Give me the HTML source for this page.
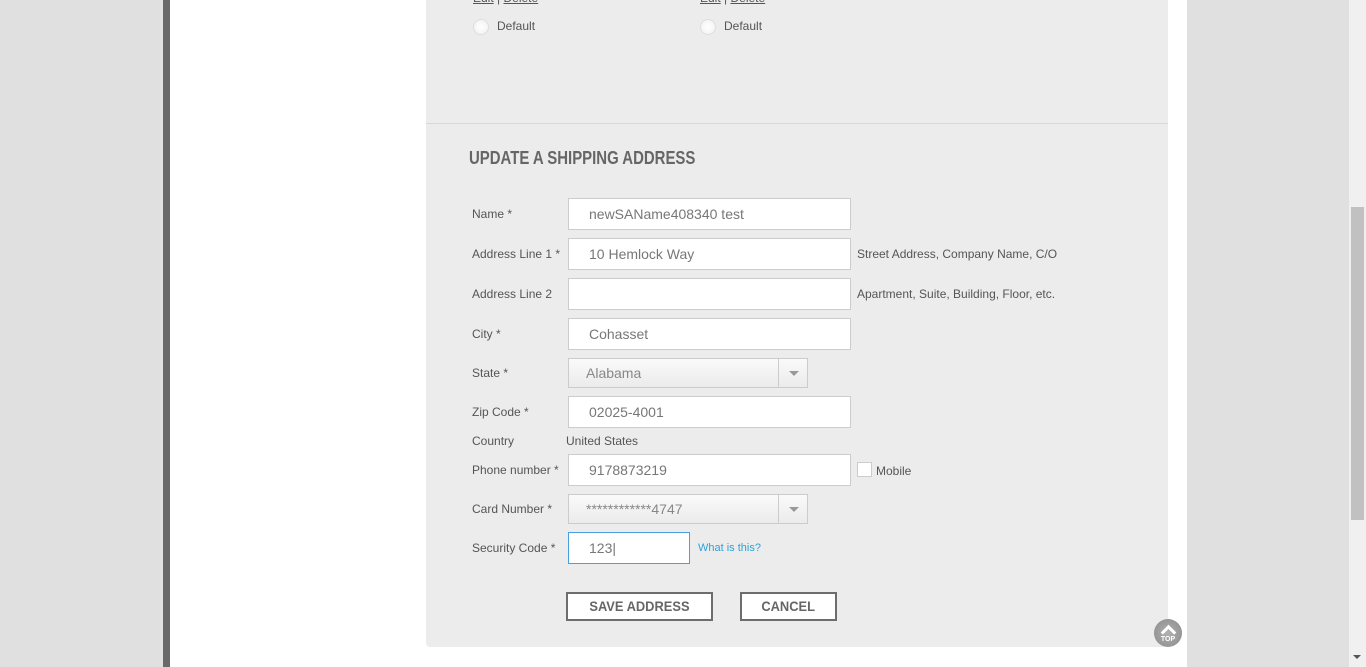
<!DOCTYPE html>
<html><head><style>
body{margin:0;width:1366px;height:667px;overflow:hidden;background:#e0e0e0;font-family:"Liberation Sans",Arial,sans-serif;position:relative}
.a{position:absolute}
.lbl{position:absolute;left:472px;font-size:12px;color:#555}
.in{position:absolute;left:568px;background:#fff;border:1px solid #ccc;font-size:14px;color:#777;line-height:30px;padding-left:20px;box-sizing:border-box;width:283px;height:32px}
.sel{position:absolute;left:568px;width:240px;height:30px;background:linear-gradient(#fafafa,#ebebeb);border:1px solid #ccc;box-sizing:border-box;font-size:14px;color:#888;line-height:28px;padding-left:17px}
.sel i{position:absolute;left:209px;top:0;width:1px;height:28px;background:#ccc}
.sel b{position:absolute;left:220px;top:12px;border-left:5px solid transparent;border-right:5px solid transparent;border-top:5px solid #999}
.hint{position:absolute;left:857px;font-size:12px;color:#555}
.btn{position:absolute;top:592px;height:29px;border:2px solid #6d6d6d;background:#fff;box-sizing:border-box;font-size:14px;font-weight:bold;color:#666;text-align:center;line-height:25px}
.btn span{display:inline-block;transform:scaleX(0.92)}
.radio{position:absolute;width:16px;height:16px;border-radius:50%;background:radial-gradient(#fff,#f0f0f0);border:1px solid #ddd;box-sizing:border-box}
u{text-decoration:underline}
</style></head><body>
<div class="a" style="left:163px;top:0;width:7px;height:667px;background:#696969"></div>
<div class="a" style="left:170px;top:0;width:1017px;height:667px;background:#fff"></div>
<div class="a" style="left:1349px;top:0;width:17px;height:667px;background:#f0f0f0"></div>
<div class="a" style="left:1351px;top:207px;width:13px;height:313px;background:#c1c1c1"></div>
<div class="a" style="left:1353px;top:655px;border-left:4px solid transparent;border-right:4px solid transparent;border-top:4px solid #555"></div>
<div class="a" style="left:426px;top:0;width:742px;height:647px;background:#ececec;border-radius:0 0 4px 4px"></div>
<div class="a" style="left:426px;top:123px;width:742px;height:1px;background:#d8d8d8"></div>
<div class="a" style="left:473px;top:-9px;font-size:12px;color:#555"><u>Edit</u> | <u>Delete</u></div>
<div class="a" style="left:700px;top:-9px;font-size:12px;color:#555"><u>Edit</u> | <u>Delete</u></div>
<div class="radio" style="left:473px;top:19px"></div>
<div class="a" style="left:497px;top:19px;font-size:12px;color:#555">Default</div>
<div class="radio" style="left:700px;top:19px"></div>
<div class="a" style="left:724px;top:19px;font-size:12px;color:#555">Default</div>
<div class="a" style="left:469px;top:148px;font-size:18px;font-weight:bold;color:#666;transform:scaleX(0.83);transform-origin:left;white-space:nowrap">UPDATE A SHIPPING ADDRESS</div>

<div class="lbl" style="top:207px">Name *</div><div class="in" style="top:198px">newSAName408340 test</div>
<div class="lbl" style="top:247px">Address Line 1 *</div><div class="in" style="top:238px">10 Hemlock Way</div><div class="hint" style="top:247px">Street Address, Company Name, C/O</div>
<div class="lbl" style="top:287px">Address Line 2</div><div class="in" style="top:278px"></div><div class="hint" style="top:287px">Apartment, Suite, Building, Floor, etc.</div>
<div class="lbl" style="top:327px">City *</div><div class="in" style="top:318px">Cohasset</div>
<div class="lbl" style="top:366px">State *</div><div class="sel" style="top:358px">Alabama<i></i><b></b></div>
<div class="lbl" style="top:405px">Zip Code *</div><div class="in" style="top:396px">02025-4001</div>
<div class="lbl" style="top:434px">Country</div><div class="a" style="left:566px;top:434px;font-size:12px;color:#555">United States</div>
<div class="lbl" style="top:463px">Phone number *</div><div class="in" style="top:454px">9178873219</div>
<div class="a" style="left:857px;top:462px;width:15px;height:15px;background:#fff;border:1px solid #ccc;box-sizing:border-box"></div>
<div class="a" style="left:876px;top:464px;font-size:12px;color:#555">Mobile</div>
<div class="lbl" style="top:502px">Card Number *</div><div class="sel" style="top:494px">************4747<i></i><b></b></div>
<div class="lbl" style="top:541px">Security Code *</div>
<div class="in" style="top:532px;width:122px;border:1px solid #4a9fe0">123|</div>
<div class="a" style="left:698px;top:542px;font-size:11px;color:#2aa3db">What is this?</div>
<div class="btn" style="left:566px;width:147px"><span>SAVE ADDRESS</span></div>
<div class="btn" style="left:740px;width:97px"><span>CANCEL</span></div>
<div class="a" style="left:1154px;top:619px;width:28px;height:28px;border-radius:50%;background:radial-gradient(#b0b0b0,#8a8a8a);color:#fff;font-size:7px;font-weight:bold;text-align:center">
<div style="margin:8px auto 0;width:8px;height:8px;border-left:3px solid #fff;border-top:3px solid #fff;transform:rotate(45deg)"></div><div style="margin-top:-2px">TOP</div></div>
</body></html>
